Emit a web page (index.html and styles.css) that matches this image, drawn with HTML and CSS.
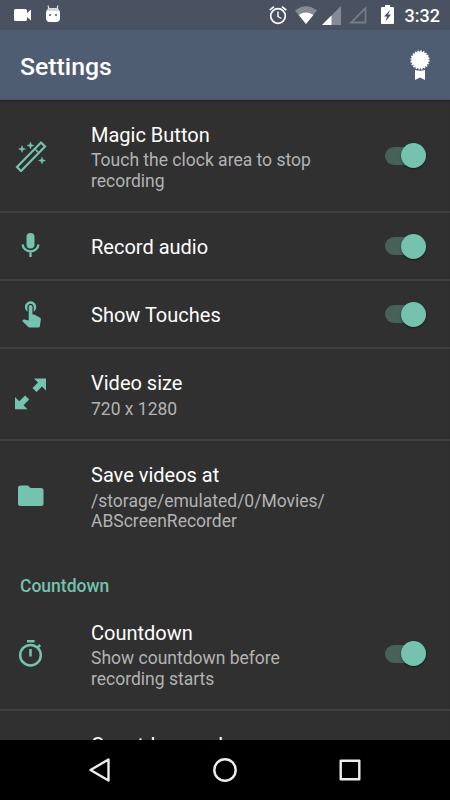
FILE: index.html
```
<!DOCTYPE html>
<html lang="en">
<head>
    <meta charset="UTF-8">
    <meta name="viewport" content="width=device-width, initial-scale=1.0">
    <title>Settings</title>
    <link rel="stylesheet" href="styles.css">
</head>
<body>

    <!-- Status bar -->
    <div class="status-bar">
        <svg class="status-camera" width="18" height="14" viewBox="0 0 18 14"><path d="M1.500 1h10q1.500 0 1.500 1.500V5l4-3.500v11L13 9v2.500q0 1.500-1.500 1.500h-10Q0 13 0 11.500v-9Q0 1 1.500 1z"/></svg>
        <svg class="status-robot" width="16" height="18" viewBox="0 0 16 18">
            <path d="M4 4L3 .5M12 4l1-3.500" stroke="#ddd" stroke-width="1.200"/>
            <path d="M3.500 3h9Q15 5 15 9v4q0 4-4 4H5q-4 0-4-4V9q0-4 2.500-6z"/>
            <path d="M3.500 3h9l1.500 3H2z" fill="#d4d6d9"/>
            <path d="M4 9h2v2H4zM10 9h2v2h-2z" fill="#777e89"/>
        </svg>
        <div class="status-right">
            <svg width="18" height="20" viewBox="0 0 18 20" class="status-alarm">
                <g fill="none" stroke="#fff" stroke-width="1.700">
                    <circle cx="9" cy="11" r="7.300"/>
                    <path d="M.7 5.200L5 1.700M17.300 5.200L13 1.700"/>
                    <path d="M9 6.500v5l3.300 2" stroke-width="1.400"/>
                </g>
            </svg>
            <svg width="22" height="18" viewBox="0 0 22 18" class="status-wifi">
                <path d="M11 18L0 4.500Q11-4 22 4.500z" fill="#858b96"/>
                <path d="M11 18L3.700 8.900Q11 4 18.300 8.900z"/>
            </svg>
            <svg width="19" height="19" viewBox="0 0 19 19" class="status-signal">
                <path d="M0 19L19 0v19z" fill="#858b96"/>
                <path d="M0 19l9.500-9.500V19z"/>
            </svg>
            <svg width="18" height="18" viewBox="0 0 18 18" class="status-nosignal">
                <path d="M2.200 16.500L16.500 2.200v14.300z" fill="none" stroke="#757c89" stroke-width="1.800"/>
            </svg>
            <svg width="13" height="19" viewBox="0 0 13 19" class="status-battery">
                <path d="M4 0h5v2h3q1 0 1 1v15q0 1-1 1H1q-1 0-1-1V3q0-1 1-1h3z"/>
                <path d="M9 5L3 11.500h3L4.500 16.500 10 9.500H7z" fill="#4a5262"/>
            </svg>
            <span class="status-time">3:32</span>
        </div>
    </div>

    <!-- App bar -->
    <header class="app-bar">
        <h1>Settings</h1>
        <svg width="20" height="31" viewBox="0 0 20 31">
            <circle cx="10" cy="10" r="8.600"/>
            <circle cx="10" cy="10" r="8.700" fill="none" stroke="#fff" stroke-width="1.800" stroke-dasharray="1.600 1.130"/>
            <path d="M5 20q2.500.8 5 .8t5-.8v10l-5-2.500L5 30z"/>
        </svg>
    </header>

    <!-- Preference list -->
    <main class="list">
        <div class="row">
            <svg class="icon" width="32" height="32" viewBox="0 0 32 32">
                <path d="M2 27L26 2.500l4 4L6 31z" fill="none" stroke="#75c2ae" stroke-width="2.200"/>
                <path d="M20 9l3.500 3.500" fill="none" stroke="#75c2ae" stroke-width="1.500"/>
                <path d="M7 5.500l.9 2.600 2.600.9-2.600.9-.9 2.600-.9-2.600L3.500 9l2.600-.9zM15.500 2l.9 2.600 2.600.9-2.600.9-.9 2.600-.9-2.600-2.600-.9 2.600-.9zM27 17l.9 2.600 2.600.9-2.600.9-.9 2.600-.9-2.600-2.600-.9 2.600-.9z" stroke="#75c2ae" stroke-width=".4"/>
            </svg>
            <div class="text">
                <div class="title">Magic Button</div>
                <div class="summary">Touch the clock area to stop<br>recording</div>
            </div>
            <div class="switch"></div>
        </div>

        <div class="row">
            <svg class="icon" width="32" height="32" viewBox="0 0 32 32">
                <rect x="11.500" y="3" width="8" height="15.500" rx="4"/>
                <path d="M7.600 14.500a8 7.700 0 0 0 15.900 0M15.500 22v5" fill="none" stroke="#75c2ae" stroke-width="2.300"/>
            </svg>
            <div class="text">
                <div class="title">Record audio</div>
            </div>
            <div class="switch"></div>
        </div>

        <div class="row">
            <svg class="icon" width="32" height="32" viewBox="0 0 32 32">
                <path transform="translate(1.200 -.4) scale(1.250)" d="M9 11.240V7.500C9 6.120 10.120 5 11.500 5S14 6.120 14 7.500v3.740c1.210-.81 2-2.180 2-3.740C16 5.010 13.990 3 11.500 3S7 5.010 7 7.500c0 1.560.79 2.930 2 3.740zm9.840 4.630l-4.540-2.260c-.17-.07-.35-.11-.54-.11H13v-6c0-.83-.67-1.500-1.500-1.500S10 6.670 10 7.500v10.740l-3.430-.72c-.08-.01-.15-.03-.24-.03-.31 0-.59.130-.79.330l-.79.800 4.940 4.940c.27.270.65.440 1.060.440h6.790c.75 0 1.330-.55 1.440-1.280l.75-5.270c.01-.07.020-.14.020-.2 0-.62-.38-1.160-.91-1.380z"/>
            </svg>
            <div class="text">
                <div class="title">Show Touches</div>
            </div>
            <div class="switch"></div>
        </div>

        <div class="row">
            <svg class="icon" width="32" height="32" viewBox="0 0 32 32">
                <path d="M19 .5h12V12.500l-4-4-5.500 5.500-4-4 5.500-5.500zM0 19l4.200 4.200 6-5.700 4 4-5.700 5.700 4 4H0z"/>
            </svg>
            <div class="text">
                <div class="title">Video size</div>
                <div class="summary">720 x 1280</div>
            </div>
        </div>

        <div class="row last">
            <svg class="icon" width="32" height="32" viewBox="0 0 32 32">
                <path d="M5.500 5.500H13L15.500 8H26q2.500 0 2.500 2.500v13q0 2.500-2.500 2.500H5.500Q3 26 3 23.500V8q0-2.500 2.500-2.500z"/>
            </svg>
            <div class="text">
                <div class="title">Save videos at</div>
                <div class="summary">/storage/emulated/0/Movies/<br>ABScreenRecorder</div>
            </div>
        </div>

        <h2>Countdown</h2>

        <div class="row">
            <svg class="icon" width="32" height="32" viewBox="0 0 32 32">
                <g fill="none" stroke="#75c2ae" stroke-width="2.500">
                    <circle cx="15.500" cy="17.200" r="10.300"/>
                    <path d="M12 3.200h7.600M15.500 11V18.500M22.500 9.500l2.700-2.500"/>
                </g>
            </svg>
            <div class="text">
                <div class="title">Countdown</div>
                <div class="summary">Show countdown before<br>recording starts</div>
            </div>
            <div class="switch"></div>
        </div>

        <div class="row">
            <div class="icon"></div>
            <div class="text">
                <div class="title">Countdown value</div>
            </div>
        </div>
    </main>

    <!-- Navigation bar -->
    <nav class="nav-bar">
        <svg width="24" height="26" viewBox="0 0 24 26"><path d="M20.500 2.500v21L2.500 13z"/></svg>
        <svg width="24" height="26" viewBox="0 0 24 26"><circle cx="12" cy="13" r="10.700"/></svg>
        <svg width="24" height="26" viewBox="0 0 24 26"><path d="M2.700 3.700h18.600v18.600H2.700z"/></svg>
    </nav>

</body>
</html>
```
FILE: styles.css
```
* {
    box-sizing: border-box;
}

body {
    margin: 0;
    width: 450px;
    height: 800px;
    display: flex;
    flex-direction: column;
    overflow: hidden;
    background-color: #303030;
    color: #fff;
    font-family: Roboto, sans-serif;
}

svg {
    display: block;
    flex: none;
    fill: #fff;
}

/* --- Status bar --- */
.status-bar {
    flex: none;
    height: 30px;
    display: flex;
    align-items: flex-start;
    padding: 0 10px 0 14px;
    background-color: #4a5262;
}
.status-camera { margin-top: 8px; }
.status-robot { margin: 5px 0 0 13px; }
.status-right {
    display: flex;
    margin-left: auto;
}
.status-alarm { margin-top: 5px; }
.status-wifi { margin: 6px 0 0 8px; }
.status-signal { margin: 6px 0 0 5px; }
.status-nosignal { margin: 6px 0 0 8px; }
.status-battery { margin: 5px 0 0 14px; }
.status-time {
    margin-left: 11px;
    font-size: 18px;
    line-height: 32px;
    font-weight: 500;
}

/* --- App bar --- */
.app-bar {
    flex: none;
    height: 70px;
    display: flex;
    align-items: center;
    justify-content: space-between;
    padding: 2px 20px 0;
    background-color: #4f5d73;
    border-bottom: 1px solid #465164;
}
h1 {
    margin: 0;
    padding-top: 2px;
    font-size: 24.8px;
    font-weight: 500;
}

/* --- Preference list --- */
.list {
    flex: 1;
    min-height: 0;
    padding-top: 0.5px;
    overflow: hidden;
    box-shadow: inset 0 3px 3px -2px #222;
}
.row {
    display: flex;
    align-items: center;
    padding: 22px 24px 20px 15px;
    border-bottom: 2px solid #404040;
}
.row.last { border-bottom-color: transparent; }
.icon {
    width: 32px;
    margin: -6px 44px -4px 0;
    fill: #75c2ae;
}
.text { flex: 1; }
.title {
    font-size: 20px;
    line-height: 24px;
}
.summary {
    padding-top: 3.5px;
    font-size: 17.5px;
    line-height: 20.5px;
    color: #b3b3b3;
}
h2 {
    margin: 0;
    height: 45px;
    padding: 0 20px;
    font-size: 17.5px;
    line-height: 65px;
    font-weight: 500;
    color: #75c2ae;
}

/* Switch track with the thumb at its right end */
.switch {
    flex: none;
    display: flex;
    align-items: center;
    justify-content: flex-end;
    width: 41px;
    height: 18px;
    margin-bottom: 2px;
    border-radius: 9px;
    background-color: #476159;
}
.switch::after {
    content: "";
    flex: none;
    width: 25px;
    height: 25px;
    border-radius: 50%;
    background-color: #75c2ae;
    box-shadow: 0 1px 2px rgba(0, 0, 0, 0.5);
}

/* --- Navigation bar --- */
.nav-bar {
    flex: none;
    height: 60px;
    display: flex;
    align-items: center;
    justify-content: center;
    gap: 101px;
    background-color: #000;
}
.nav-bar svg {
    fill: none;
    stroke: #eee;
    stroke-width: 2.4;
    stroke-linejoin: round;
}
```
